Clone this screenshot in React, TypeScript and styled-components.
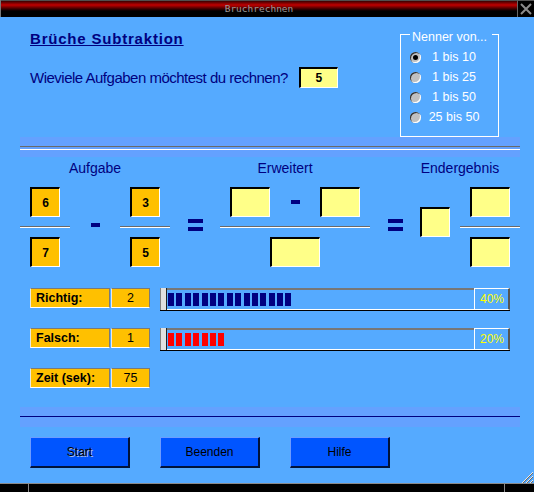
import React from 'react'
import styled, { createGlobalStyle } from 'styled-components'

const GlobalStyle = createGlobalStyle`
  html, body {
    margin: 0;
    padding: 0;
    background: #000;
  }
  body {
    font-family: 'Liberation Sans', Arial, sans-serif;
  }
  * {
    box-sizing: border-box;
  }
`

const navy = '#000080'
const orange = '#ffc000'
const yellow = '#ffff88'

export const Window = styled.div`
  width: 534px;
  height: 492px;
  display: flex;
  flex-direction: column;
  background: #55aaff;
  overflow: hidden;
`

export const TitleBar = styled.div`
  flex: 0 0 17px;
  display: flex;
`

export const TitleStripe = styled.div`
  flex: 1;
  display: flex;
  align-items: center;
  justify-content: center;
  border-left: 1px solid #777;
  background: linear-gradient(
    #505050 0 1px,
    #3a0000 1px,
    #c00000 5px,
    #3a0000 9px,
    #000 11px,
    #000 100%
  );
  color: #9a9a9a;
  font-family: 'DejaVu Sans Mono', monospace;
  font-size: 9.5px;
`

export const CloseButton = styled.div`
  flex: 0 0 17px;
  display: flex;
  align-items: center;
  justify-content: center;
  background: #000;
  border-left: 1px solid #666;
  border-top: 1px solid #555;
`

export const Content = styled.div`
  flex: 1;
  display: flex;
  flex-direction: column;
`

export const TopSection = styled.div`
  height: 120px;
  display: flex;
  justify-content: space-between;
`

export const Intro = styled.div`
  padding: 13px 0 0 30px;
`

export const Heading = styled.h1`
  margin: 0;
  font-size: 15px;
  line-height: 17px;
  font-weight: bold;
  letter-spacing: 0.8px;
  color: ${navy};
  text-decoration: underline;
`

export const QuestionRow = styled.div`
  display: flex;
  align-items: center;
  gap: 11px;
  margin-top: 20px;
  height: 21px;
`

export const QuestionText = styled.span`
  font-size: 15px;
  line-height: 21px;
  letter-spacing: -0.5px;
  color: ${navy};
`

export const Sunken = styled.div<{ $w?: number; $h?: number; $tone: 'orange' | 'yellow' }>`
  width: ${p => p.$w ?? 30}px;
  height: ${p => p.$h ?? 30}px;
  display: flex;
  align-items: center;
  justify-content: center;
  background: ${p => (p.$tone === 'orange' ? orange : yellow)};
  border-top: 2px solid #000;
  border-left: 2px solid #000;
  border-right: 1px solid #fff;
  border-bottom: 1px solid #fff;
  font-size: 12px;
  font-weight: bold;
  color: #000;
`

export const Group = styled.fieldset`
  margin: 7px 35px 0 0;
  padding: 3px 2px 9px 9px;
  width: 99px;
  border: 1px solid #fff;
  align-self: flex-start;
`

export const Legend = styled.legend`
  padding: 6px 5px 0 2px;
  white-space: nowrap;
  font-size: 12.5px;
  line-height: 14px;
  color: #fff;
`

export const RadioRow = styled.label`
  display: flex;
  align-items: center;
  height: 20px;
`

export const RadioDot = styled.span<{ $checked?: boolean }>`
  flex: 0 0 11px;
  width: 11px;
  height: 11px;
  border-radius: 50%;
  background: #c0c0c0;
  box-shadow: inset 1px 1px 0 #303030, inset -1px -1px 0 #fff;
  display: flex;
  align-items: center;
  justify-content: center;
  &::after {
    content: '';
    width: 5px;
    height: 5px;
    border-radius: 50%;
    background: ${p => (p.$checked ? '#000' : 'transparent')};
  }
`

export const RadioLabel = styled.span`
  width: 60px;
  margin-left: 3px;
  text-align: center;
  white-space: nowrap;
  font-size: 12.5px;
  color: #fff;
`

export const Band = styled.div<{ $line: 'groove' | 'navy' }>`
  margin-left: 20px;
  width: 500px;
  height: 20px;
  padding-top: 9px;
  background: #64a1ff;
  &::before {
    content: '';
    display: block;
    height: ${p => (p.$line === 'groove' ? 2 : 1)}px;
    border-top: 1px solid ${p => (p.$line === 'groove' ? '#6a6a6a' : navy)};
    border-bottom: ${p => (p.$line === 'groove' ? '1px solid #fff' : 'none')};
  }
`

export const HeaderRow = styled.div`
  display: flex;
  margin-top: 3px;
  height: 16px;
  padding-left: 20px;
`

export const HeaderCell = styled.div<{ $w: number; $ml?: number }>`
  width: ${p => p.$w}px;
  margin-left: ${p => p.$ml ?? 0}px;
  text-align: center;
  font-size: 14px;
  line-height: 16px;
  color: ${navy};
`

export const FractionRow = styled.div`
  display: flex;
  margin-top: 11px;
  height: 80px;
  padding-left: 20px;
`

export const Fraction = styled.div<{ $w: number }>`
  width: ${p => p.$w}px;
  display: flex;
  flex-direction: column;
  align-items: center;
  justify-content: space-between;
`

export const FractionLine = styled.div`
  align-self: stretch;
  height: 2px;
  border-top: 1px solid #6a6a6a;
  border-bottom: 1px solid #fff;
`

export const TermRow = styled.div`
  align-self: stretch;
  display: flex;
  align-items: center;
  padding-left: 10px;
`

export const Operator = styled.div<{ $w: number; $top: number; $start?: boolean }>`
  width: ${p => p.$w}px;
  display: flex;
  justify-content: ${p => (p.$start ? 'flex-start' : 'center')};
  align-items: flex-start;
  padding-top: ${p => p.$top}px;
`

export const Minus = styled.div`
  width: 9px;
  height: 4px;
  background: ${navy};
`

export const Equals = styled.div`
  width: 15px;
  height: 12px;
  border-top: 4px solid ${navy};
  border-bottom: 4px solid ${navy};
`

export const StatsList = styled.div`
  display: flex;
  flex-direction: column;
  gap: 20.3px;
  margin-top: 20.5px;
  padding-left: 30px;
`

export const StatRow = styled.div`
  display: flex;
  align-items: flex-start;
  height: 20px;
`

export const StatCell = styled.div<{ $w: number; $bold?: boolean }>`
  width: ${p => p.$w}px;
  height: 20px;
  margin-right: 1px;
  padding-left: ${p => (p.$bold ? 5 : 0)}px;
  background: ${orange};
  border-top: 1px solid #7a7a7a;
  border-left: 1px solid #e8e8e8;
  border-right: 1px solid #7a7a7a;
  border-bottom: 1px solid #fff;
  font-size: 12.5px;
  line-height: 18px;
  font-weight: ${p => (p.$bold ? 'bold' : 'normal')};
  text-align: ${p => (p.$bold ? 'left' : 'center')};
  color: #000;
`

export const Meter = styled.div`
  margin-left: 9px;
  width: 350px;
  height: 23px;
  display: flex;
  border-bottom: 1px solid #000;
`

export const MeterHandle = styled.div`
  width: 7px;
  background: #e0e0e0;
  border-left: 1px solid #808080;
  border-right: 1px solid #222;
`

export const MeterTrough = styled.div`
  flex: 1;
  display: flex;
  align-items: center;
  gap: 2.4px;
  padding-left: 1px;
  border-top: 2px solid #777;
  border-bottom: 1px solid #fff;
`

export const MeterBlock = styled.div<{ $color: string }>`
  width: 6px;
  height: 13px;
  background: ${p => p.$color};
`

export const MeterValue = styled.div`
  width: 36px;
  padding-right: 4px;
  display: flex;
  align-items: center;
  justify-content: flex-end;
  border-top: 1px solid #fff;
  border-left: 1px solid #fff;
  border-right: 2px solid #555;
  border-bottom: 1px solid #fff;
  font-size: 12px;
  color: #ffff00;
`

export const Footer = styled.div`
  display: flex;
  gap: 30px;
  margin-top: 10px;
  height: 46px;
  padding-left: 30px;
`

export const Button = styled.button<{ $ghost?: boolean }>`
  width: 100px;
  height: 31px;
  padding: 0;
  background: #0055ff;
  border-style: solid;
  border-width: 1px 2px 2px 1px;
  border-color: #6d9cff #00123a #00123a #6d9cff;
  font-family: 'Liberation Sans', Arial, sans-serif;
  font-size: 12px;
  color: #000;
  text-shadow: ${p => (p.$ghost ? '1px 1px 0 #a9bde6' : 'none')};
`

export const Grip = styled.div`
  margin-left: auto;
  align-self: flex-end;
  width: 14px;
  height: 13px;
`

export const StatusBar = styled.div`
  flex: 0 0 9px;
  display: flex;
  background: #000;
  border-top: 1px solid #8a8a8a;
`

export const StatusCell = styled.div<{ $w?: number }>`
  ${p => (p.$w ? `width: ${p.$w}px;` : 'flex: 1;')}
  border-right: 1px solid #8a8a8a;
  &:last-child {
    border-right: none;
  }
`

const ranges = ['1 bis 10', '1 bis 25', '1 bis 50', '25 bis 50']

const stats = [
  { label: 'Richtig:', value: '2', blocks: 15, color: navy, pct: '40%' },
  { label: 'Falsch:', value: '1', blocks: 7, color: '#ff0000', pct: '20%' },
  { label: 'Zeit (sek):', value: '75' },
]

export default function App() {
  return (
    <>
      <GlobalStyle />
      <Window>
        <TitleBar>
          <TitleStripe>Bruchrechnen</TitleStripe>
          <CloseButton>
            <svg width="12" height="12" viewBox="0 0 12 12">
              <path d="M1 1 L11 11 M11 1 L1 11" stroke="#8c8c8c" strokeWidth="2" />
            </svg>
          </CloseButton>
        </TitleBar>
        <Content>
          <TopSection>
            <Intro>
              <Heading>Brüche Subtraktion</Heading>
              <QuestionRow>
                <QuestionText>Wieviele Aufgaben möchtest du rechnen?</QuestionText>
                <Sunken $tone="yellow" $w={39} $h={21}>5</Sunken>
              </QuestionRow>
            </Intro>
            <Group>
              <Legend>Nenner von...</Legend>
              {ranges.map((r, i) => (
                <RadioRow key={r}>
                  <RadioDot $checked={i === 0} />
                  <RadioLabel>{r}</RadioLabel>
                </RadioRow>
              ))}
            </Group>
          </TopSection>

          <Band $line="groove" />

          <HeaderRow>
            <HeaderCell $w={150}>Aufgabe</HeaderCell>
            <HeaderCell $w={130} $ml={50}>Erweitert</HeaderCell>
            <HeaderCell $w={100} $ml={60}>Endergebnis</HeaderCell>
          </HeaderRow>

          <FractionRow>
            <Fraction $w={50}>
              <Sunken $tone="orange">6</Sunken>
              <FractionLine />
              <Sunken $tone="orange">7</Sunken>
            </Fraction>
            <Operator $w={50} $top={36}><Minus /></Operator>
            <Fraction $w={50}>
              <Sunken $tone="orange">3</Sunken>
              <FractionLine />
              <Sunken $tone="orange">5</Sunken>
            </Fraction>
            <Operator $w={50} $top={32}><Equals /></Operator>
            <Fraction $w={150}>
              <TermRow>
                <Sunken $tone="yellow" $w={40} />
                <Operator $w={50} $top={0}><Minus /></Operator>
                <Sunken $tone="yellow" $w={40} />
              </TermRow>
              <FractionLine />
              <Sunken $tone="yellow" $w={50} />
            </Fraction>
            <Operator $w={50} $top={32}><Equals /></Operator>
            <Operator $w={40} $top={20} $start>
              <Sunken $tone="yellow" />
            </Operator>
            <Fraction $w={60}>
              <Sunken $tone="yellow" $w={40} />
              <FractionLine />
              <Sunken $tone="yellow" $w={40} />
            </Fraction>
          </FractionRow>

          <StatsList>
            {stats.map(s => (
              <StatRow key={s.label}>
                <StatCell $w={80} $bold>{s.label}</StatCell>
                <StatCell $w={39}>{s.value}</StatCell>
                {s.blocks !== undefined && (
                  <Meter>
                    <MeterHandle />
                    <MeterTrough>
                      {Array.from({ length: s.blocks }, (_, i) => (
                        <MeterBlock key={i} $color={s.color!} />
                      ))}
                    </MeterTrough>
                    <MeterValue>{s.pct}</MeterValue>
                  </Meter>
                )}
              </StatRow>
            ))}
          </StatsList>

          <Band $line="navy" style={{ marginTop: 19 }} />

          <Footer>
            <Button $ghost>Start</Button>
            <Button>Beenden</Button>
            <Button>Hilfe</Button>
            <Grip>
              <svg width="14" height="13" viewBox="0 0 14 13">
                <path d="M13 1 L1 13 M13 5 L5 13 M13 9 L9 13" stroke="#e8e8e8" strokeWidth="1" />
                <path d="M13 2 L2 13 M13 6 L6 13 M13 10 L10 13" stroke="#6a6a6a" strokeWidth="1" />
              </svg>
            </Grip>
          </Footer>
        </Content>
        <StatusBar>
          <StatusCell $w={29} />
          <StatusCell />
          <StatusCell $w={29} />
        </StatusBar>
      </Window>
    </>
  )
}
